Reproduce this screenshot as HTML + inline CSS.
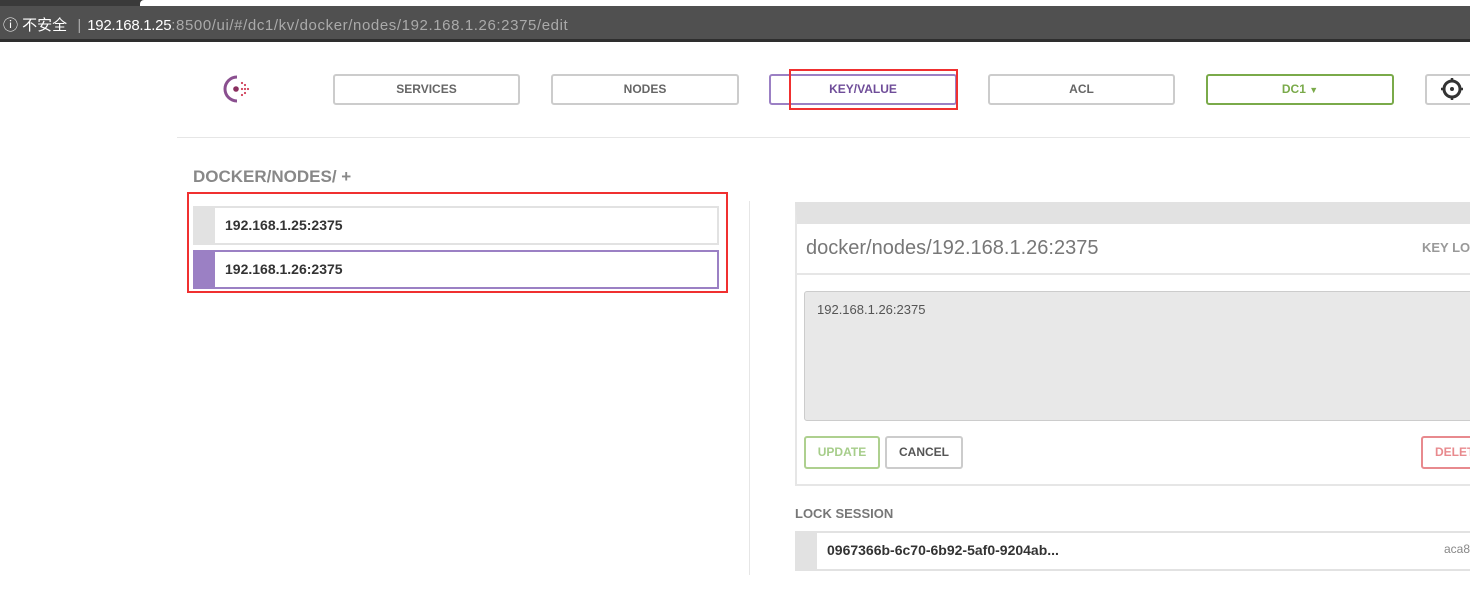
<!DOCTYPE html>
<html><head><meta charset="utf-8"><style>
*{box-sizing:border-box;margin:0;padding:0}
body{width:1470px;height:610px;overflow:hidden;background:#fff;font-family:"Liberation Sans",Arial,sans-serif;position:relative}
.a{position:absolute}
.btn{position:absolute;top:74px;height:31px;border:2px solid #ccc;border-radius:3px;font-size:12px;font-weight:bold;color:#666;text-align:center;line-height:27px}
</style></head><body>
<div class="a" style="left:0;top:0;width:1470px;height:8px;background:#3a3a3a"></div>
<div class="a" style="left:140px;top:0;width:1330px;height:6px;background:#fff;border-radius:4px 0 0 0"></div>
<div class="a" style="left:0;top:6px;width:1470px;height:36px;background:#505050;border-bottom:3px solid #2e2e2e"></div>
<div class="a" style="left:3px;top:14px;font-size:15px;color:#fff;font-family:'Liberation Sans','Noto Sans CJK SC',sans-serif;white-space:nowrap">ⓘ 不安全 <span style="color:#aaa;margin:0 6px">|</span><span style="letter-spacing:-0.3px">192.168.1.25</span><span style="color:#aaa;letter-spacing:0.6px">:8500/ui/#/dc1/kv/docker/nodes/192.168.1.26:2375/edit</span></div>

<svg class="a" style="left:221px;top:73px" width="34" height="32" viewBox="0 0 34 32"><path d="M16 4 A12 12 0 1 0 16 28" fill="none" stroke="#8a4f8f" stroke-width="3"/><circle cx="15" cy="16" r="2.8" fill="#8a2f5f"/><g fill="#d0405a"><circle cx="21" cy="10" r="1.1"/><circle cx="24" cy="12" r="1.1"/><circle cx="21" cy="16" r="1.1"/><circle cx="24" cy="16" r="1.1"/><circle cx="21" cy="22" r="1.1"/><circle cx="24" cy="20" r="1.1"/><circle cx="27" cy="16" r="1.1"/></g></svg>
<div class="btn" style="left:333px;width:187px">SERVICES</div>
<div class="btn" style="left:551px;width:188px">NODES</div>
<div class="btn" style="left:769px;width:188px;border-color:#9b80c4;color:#6f4d99">KEY/VALUE</div>
<div class="a" style="left:789px;top:69px;width:169px;height:41px;border:2px solid #f03030"></div>
<div class="btn" style="left:988px;width:187px">ACL</div>
<div class="btn" style="left:1206px;width:188px;border-color:#7aaa4a;color:#7aaa4a">DC1 <span style="font-size:9px">▼</span></div>
<div class="btn" style="left:1425px;width:60px"></div>
<svg class="a" style="left:1440px;top:77px" width="24" height="24" viewBox="0 0 24 24"><circle cx="12" cy="12" r="8" fill="none" stroke="#333" stroke-width="3"/><circle cx="12" cy="12" r="2" fill="#333"/><g stroke="#333" stroke-width="2.5"><path d="M12 1v4M12 19v4M1 12h4M19 12h4"/></g></svg>
<div class="a" style="left:177px;top:137px;width:1293px;height:1px;background:#e6e6e6"></div>

<div class="a" style="left:193px;top:167px;font-size:17px;font-weight:bold;color:#888">DOCKER/NODES/ +</div>
<div class="a" style="left:187px;top:192px;width:541px;height:101px;border:2px solid #f03030"></div>
<div class="a" style="left:193px;top:206px;width:526px;height:39px;border:2px solid #e2e2e2;border-left:22px solid #e2e2e2;font-size:14px;font-weight:bold;color:#333;padding:9px 0 0 10px">192.168.1.25:2375</div>
<div class="a" style="left:193px;top:250px;width:526px;height:39px;border:2px solid #9b80c4;border-left:22px solid #9b80c4;font-size:14px;font-weight:bold;color:#333;padding:9px 0 0 10px">192.168.1.26:2375</div>
<div class="a" style="left:749px;top:201px;width:1px;height:374px;background:#e6e6e6"></div>

<div class="a" style="left:795px;top:202px;width:690px;height:284px;border:2px solid #e6e6e6;border-top:22px solid #e2e2e2"></div>
<div class="a" style="left:806px;top:237px;font-size:20px;color:#777">docker/nodes/192.168.1.26:2375</div>
<div class="a" style="left:1422px;top:240px;font-size:13px;font-weight:bold;color:#999;white-space:nowrap">KEY LO</div>
<div class="a" style="left:797px;top:273px;width:680px;height:2px;background:#e6e6e6"></div>
<div class="a" style="left:804px;top:291px;width:680px;height:130px;background:#e8e8e8;border:1px solid #ccc;border-radius:3px;font-size:13px;color:#555;padding:10px 12px">192.168.1.26:2375</div>
<div class="a" style="left:804px;top:436px;width:76px;height:33px;border:2px solid #aed08f;border-radius:3px;color:#a6cd8a;font-size:12px;font-weight:bold;text-align:center;line-height:29px">UPDATE</div>
<div class="a" style="left:885px;top:436px;width:78px;height:33px;border:2px solid #ccc;border-radius:3px;color:#555;font-size:12px;font-weight:bold;text-align:center;line-height:29px">CANCEL</div>
<div class="a" style="left:1421px;top:436px;width:80px;height:33px;border:2px solid #e88a8e;border-radius:3px;color:#e88a8e;font-size:12px;font-weight:bold;line-height:29px;padding-left:12px">DELETE</div>

<div class="a" style="left:795px;top:506px;font-size:13px;font-weight:bold;color:#777">LOCK SESSION</div>
<div class="a" style="left:795px;top:531px;width:690px;height:40px;border:2px solid #e2e2e2;border-left:22px solid #e2e2e2;font-size:14px;font-weight:bold;color:#333;padding:9px 0 0 10px">0967366b-6c70-6b92-5af0-9204ab...</div>
<div class="a" style="left:1444px;top:542px;font-size:12px;color:#888">aca8</div>
</body></html>
